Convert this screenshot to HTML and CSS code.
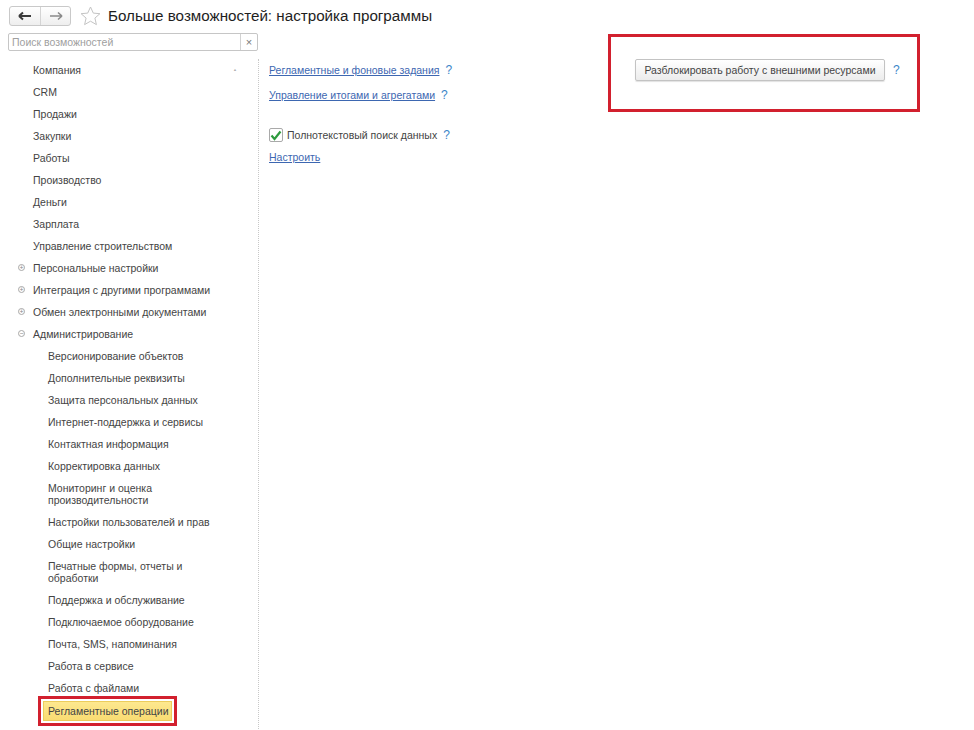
FILE: index.html
```html
<!DOCTYPE html>
<html lang="ru">
<head>
<meta charset="utf-8">
<title>Больше возможностей: настройка программы</title>
<link rel="stylesheet" href="styles.css">
</head>
<body>
<div class="header">
  <div class="navgroup">
    <div class="navbtn">
      <svg width="14" height="10" viewBox="0 0 14 10"><path d="M2 5H13M1 5L5 1.5M1 5L5 8.5" stroke="#3a3a3a" stroke-width="2" fill="none"/></svg>
    </div>
    <div class="navbtn">
      <svg width="14" height="10" viewBox="0 0 14 10"><path d="M1 5H12M13 5L9 1.5M13 5L9 8.5" stroke="#8a8a8a" stroke-width="1.6" fill="none"/></svg>
    </div>
  </div>
  <svg class="star" width="21" height="20" viewBox="0 0 21 20"><path d="M10.5 1L13.3 7.1L19.9 7.7L14.9 12.1L16.4 18.6L10.5 15.2L4.6 18.6L6.1 12.1L1.1 7.7L7.7 7.1Z" fill="none" stroke="#c4c4c4" stroke-width="1"/></svg>
  <h1 class="title">Больше возможностей: настройка программы</h1>
</div>
<div class="search">
  <span class="search-ph">Поиск возможностей</span>
  <span class="search-clear">×</span>
</div>
<div class="main">
  <div class="sidebar">
    <span class="scroll-up">▲</span>
    <ul class="tree">
      <li class="item">Компания</li>
      <li class="item">CRM</li>
      <li class="item">Продажи</li>
      <li class="item">Закупки</li>
      <li class="item">Работы</li>
      <li class="item">Производство</li>
      <li class="item">Деньги</li>
      <li class="item">Зарплата</li>
      <li class="item">Управление строительством</li>
      <li class="item"><span class="exp">+</span>Персональные настройки</li>
      <li class="item"><span class="exp">+</span>Интеграция с другими программами</li>
      <li class="item"><span class="exp">+</span>Обмен электронными документами</li>
      <li class="item"><span class="exp">−</span>Администрирование</li>
      <li class="item sub">Версионирование объектов</li>
      <li class="item sub">Дополнительные реквизиты</li>
      <li class="item sub">Защита персональных данных</li>
      <li class="item sub">Интернет-поддержка и сервисы</li>
      <li class="item sub">Контактная информация</li>
      <li class="item sub">Корректировка данных</li>
      <li class="item sub">Мониторинг и оценка<br>производительности</li>
      <li class="item sub">Настройки пользователей и прав</li>
      <li class="item sub">Общие настройки</li>
      <li class="item sub">Печатные формы, отчеты и<br>обработки</li>
      <li class="item sub">Поддержка и обслуживание</li>
      <li class="item sub">Подключаемое оборудование</li>
      <li class="item sub">Почта, SMS, напоминания</li>
      <li class="item sub">Работа в сервисе</li>
      <li class="item sub">Работа с файлами</li>
      <li class="item sub"><span class="selected">Регламентные операции</span></li>
    </ul>
  </div>
  <div class="content">
    <div class="settings">
      <div class="row row-link1"><a class="link" href="#">Регламентные и фоновые задания</a><span class="help">?</span></div>
      <div class="row row-link2"><a class="link" href="#">Управление итогами и агрегатами</a><span class="help">?</span></div>
      <div class="row row-check">
        <span class="checkbox"><svg width="12" height="11" viewBox="0 0 12 11"><path d="M1.5 5.5L4.5 9L10.5 1.5" stroke="#2e9b3e" stroke-width="2.2" fill="none"/></svg></span>
        <span class="label">Полнотекстовый поиск данных</span><span class="help">?</span>
      </div>
      <div class="row row-setup"><a class="link" href="#">Настроить</a></div>
    </div>
    <div class="callout">
      <button class="btn" type="button">Разблокировать работу с внешними ресурсами</button><span class="help">?</span>
    </div>
  </div>
</div>
</body>
</html>
```
FILE: styles.css
```css
* { box-sizing: border-box; }
html, body { margin: 0; padding: 0; background: #fff; }
body {
  font-family: "Liberation Sans", Arial, sans-serif;
  font-size: 10.5px;
  color: #444;
  width: 974px;
  height: 730px;
  overflow: hidden;
}
.header {
  display: flex;
  align-items: center;
  padding: 5px 0 0 9px;
  height: 26px;
}
.navgroup {
  display: flex;
  height: 20px;
  border: 1px solid #c9c9c9;
  border-radius: 3px;
  background: linear-gradient(#ffffff, #eeeeee);
}
.navbtn {
  width: 30px;
  display: flex;
  align-items: center;
  justify-content: center;
}
.navbtn + .navbtn { border-left: 1px solid #d4d4d4; }
.star { margin-left: 9px; }
.title {
  margin: 0 0 0 7px;
  font-size: 15.2px;
  font-weight: normal;
  color: #1e1e1e;
  line-height: 20px;
}
.search {
  margin: 7px 0 0 8px;
  width: 250px;
  height: 18px;
  border: 1px solid #c6c6c6;
  border-radius: 2px;
  display: flex;
  align-items: center;
}
.search-ph {
  flex: 1;
  padding-left: 3px;
  color: #a0a0a0;
  font-size: 10.5px;
}
.search-clear {
  width: 17px;
  height: 100%;
  border-left: 1px solid #d2d2d2;
  display: flex;
  align-items: center;
  justify-content: center;
  color: #777;
  font-size: 11px;
}
.main {
  display: flex;
  margin-top: 8px;
}
.sidebar {
  position: relative;
  width: 251px;
  margin-left: 8px;
  height: 670px;
  border-right: 1px dotted #c8c8c8;
}
.scroll-up {
  position: absolute;
  top: 8px;
  left: 225px;
  font-size: 4px;
  color: #b0b0b0;
}
.tree { list-style: none; margin: 0; padding: 0; }
.item {
  position: relative;
  padding: 5px 0 5px 25px;
  line-height: 12px;
  color: #444;
}
.item.sub { padding-left: 40px; }
.exp {
  position: absolute;
  left: 10px;
  top: 7px;
  width: 7px;
  height: 7px;
  border: 1px solid #a8a8a8;
  border-radius: 50%;
  font-size: 7px;
  line-height: 5px;
  text-align: center;
  color: #888;
}
.selected {
  display: inline-block;
  margin: -3px 0 -3px -5px;
  padding: 3px 2px 3px 4px;
  background: linear-gradient(#fde88f, #f9dc72);
  border: 1px solid #eccd5c;
  outline: 3px solid #d2202e;
  outline-offset: 2px;
}
.content {
  display: flex;
  align-items: flex-start;
  padding-left: 10px;
}
.settings { width: 339px; }
.row {
  display: flex;
  align-items: center;
  line-height: 12px;
}
.row-link1 { padding-top: 5px; }
.row-link2 { margin-top: 13px; }
.row-check { margin-top: 27px; }
.row-setup { margin-top: 9px; }
.link {
  color: #3d67b1;
  text-decoration: underline;
}
.help {
  color: #3b86c9;
  font-size: 12px;
  margin-left: 6px;
}
.checkbox {
  width: 14px;
  height: 14px;
  border: 1px solid #a9a9a9;
  border-radius: 2px;
  display: flex;
  align-items: center;
  justify-content: center;
  margin-right: 4px;
  background: #fff;
}
.label { color: #444; }
.callout {
  margin-top: -25px;
  width: 312px;
  height: 78px;
  border: 3px solid #d2202e;
  display: flex;
  align-items: center;
  padding-left: 24px;
  padding-bottom: 6px;
}
.btn {
  font-family: inherit;
  font-size: 10.5px;
  color: #444;
  width: 250px;
  height: 22px;
  border: 1px solid #c3c3c3;
  border-radius: 2px;
  background: linear-gradient(#ffffff, #ececec);
  box-shadow: 0 1px 1px rgba(0,0,0,0.12);
  padding: 0;
}
.callout .help { margin-left: 8px; }
```
